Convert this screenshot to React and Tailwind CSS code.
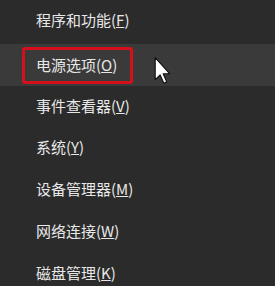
import React from "react";

const items = [
  { label: "程序和功能", key: "F" },
  { label: "电源选项", key: "O", active: true },
  { label: "事件查看器", key: "V" },
  { label: "系统", key: "Y" },
  { label: "设备管理器", key: "M" },
  { label: "网络连接", key: "W" },
  { label: "磁盘管理", key: "K" },
];

const rowHeights = ["h-[44px] pb-[4px]", "h-[42px]", "h-[40px]", "h-[42px]", "h-[42px]", "h-[42px]", "h-[42px]"];

const Cursor = () => (
  <svg
    className="absolute left-[154px] top-[13px]"
    width="18"
    height="27"
    viewBox="0 0 12 19"
  >
    <path
      d="M0.5 0.5 L0.5 16 L4 12.6 L6.6 18.4 L8.6 17.5 L6.1 11.8 L10.8 11.8 Z"
      fill="#ffffff"
      stroke="#111111"
      strokeWidth="0.8"
      strokeLinejoin="round"
    />
  </svg>
);

export default function App() {
  return (
    <div
      className="w-[275px] h-[286px] bg-[#2b2b2b] overflow-hidden flex flex-col"
      style={{ fontFamily: '"Noto Sans CJK SC", "Noto Sans", sans-serif' }}
    >
      {items.map((item, i) => (
        <div
          key={item.key}
          className={`relative flex items-center pl-[36px] shrink-0 text-[15px] text-[#e8e8e8] ${rowHeights[i]} ${
            item.active ? "bg-[#3a3a3a]" : ""
          }`}
        >
          <span>
            {item.label}(<span className="underline underline-offset-[1px]">{item.key}</span>)
          </span>
          {item.active && (
            <>
              {/* red highlight frame */}
              <div className="absolute left-[22px] top-[3px] w-[111px] h-[37px] border-[3px] border-[#d3101c] rounded-[3px]" />
              <Cursor />
            </>
          )}
        </div>
      ))}
    </div>
  );
}
